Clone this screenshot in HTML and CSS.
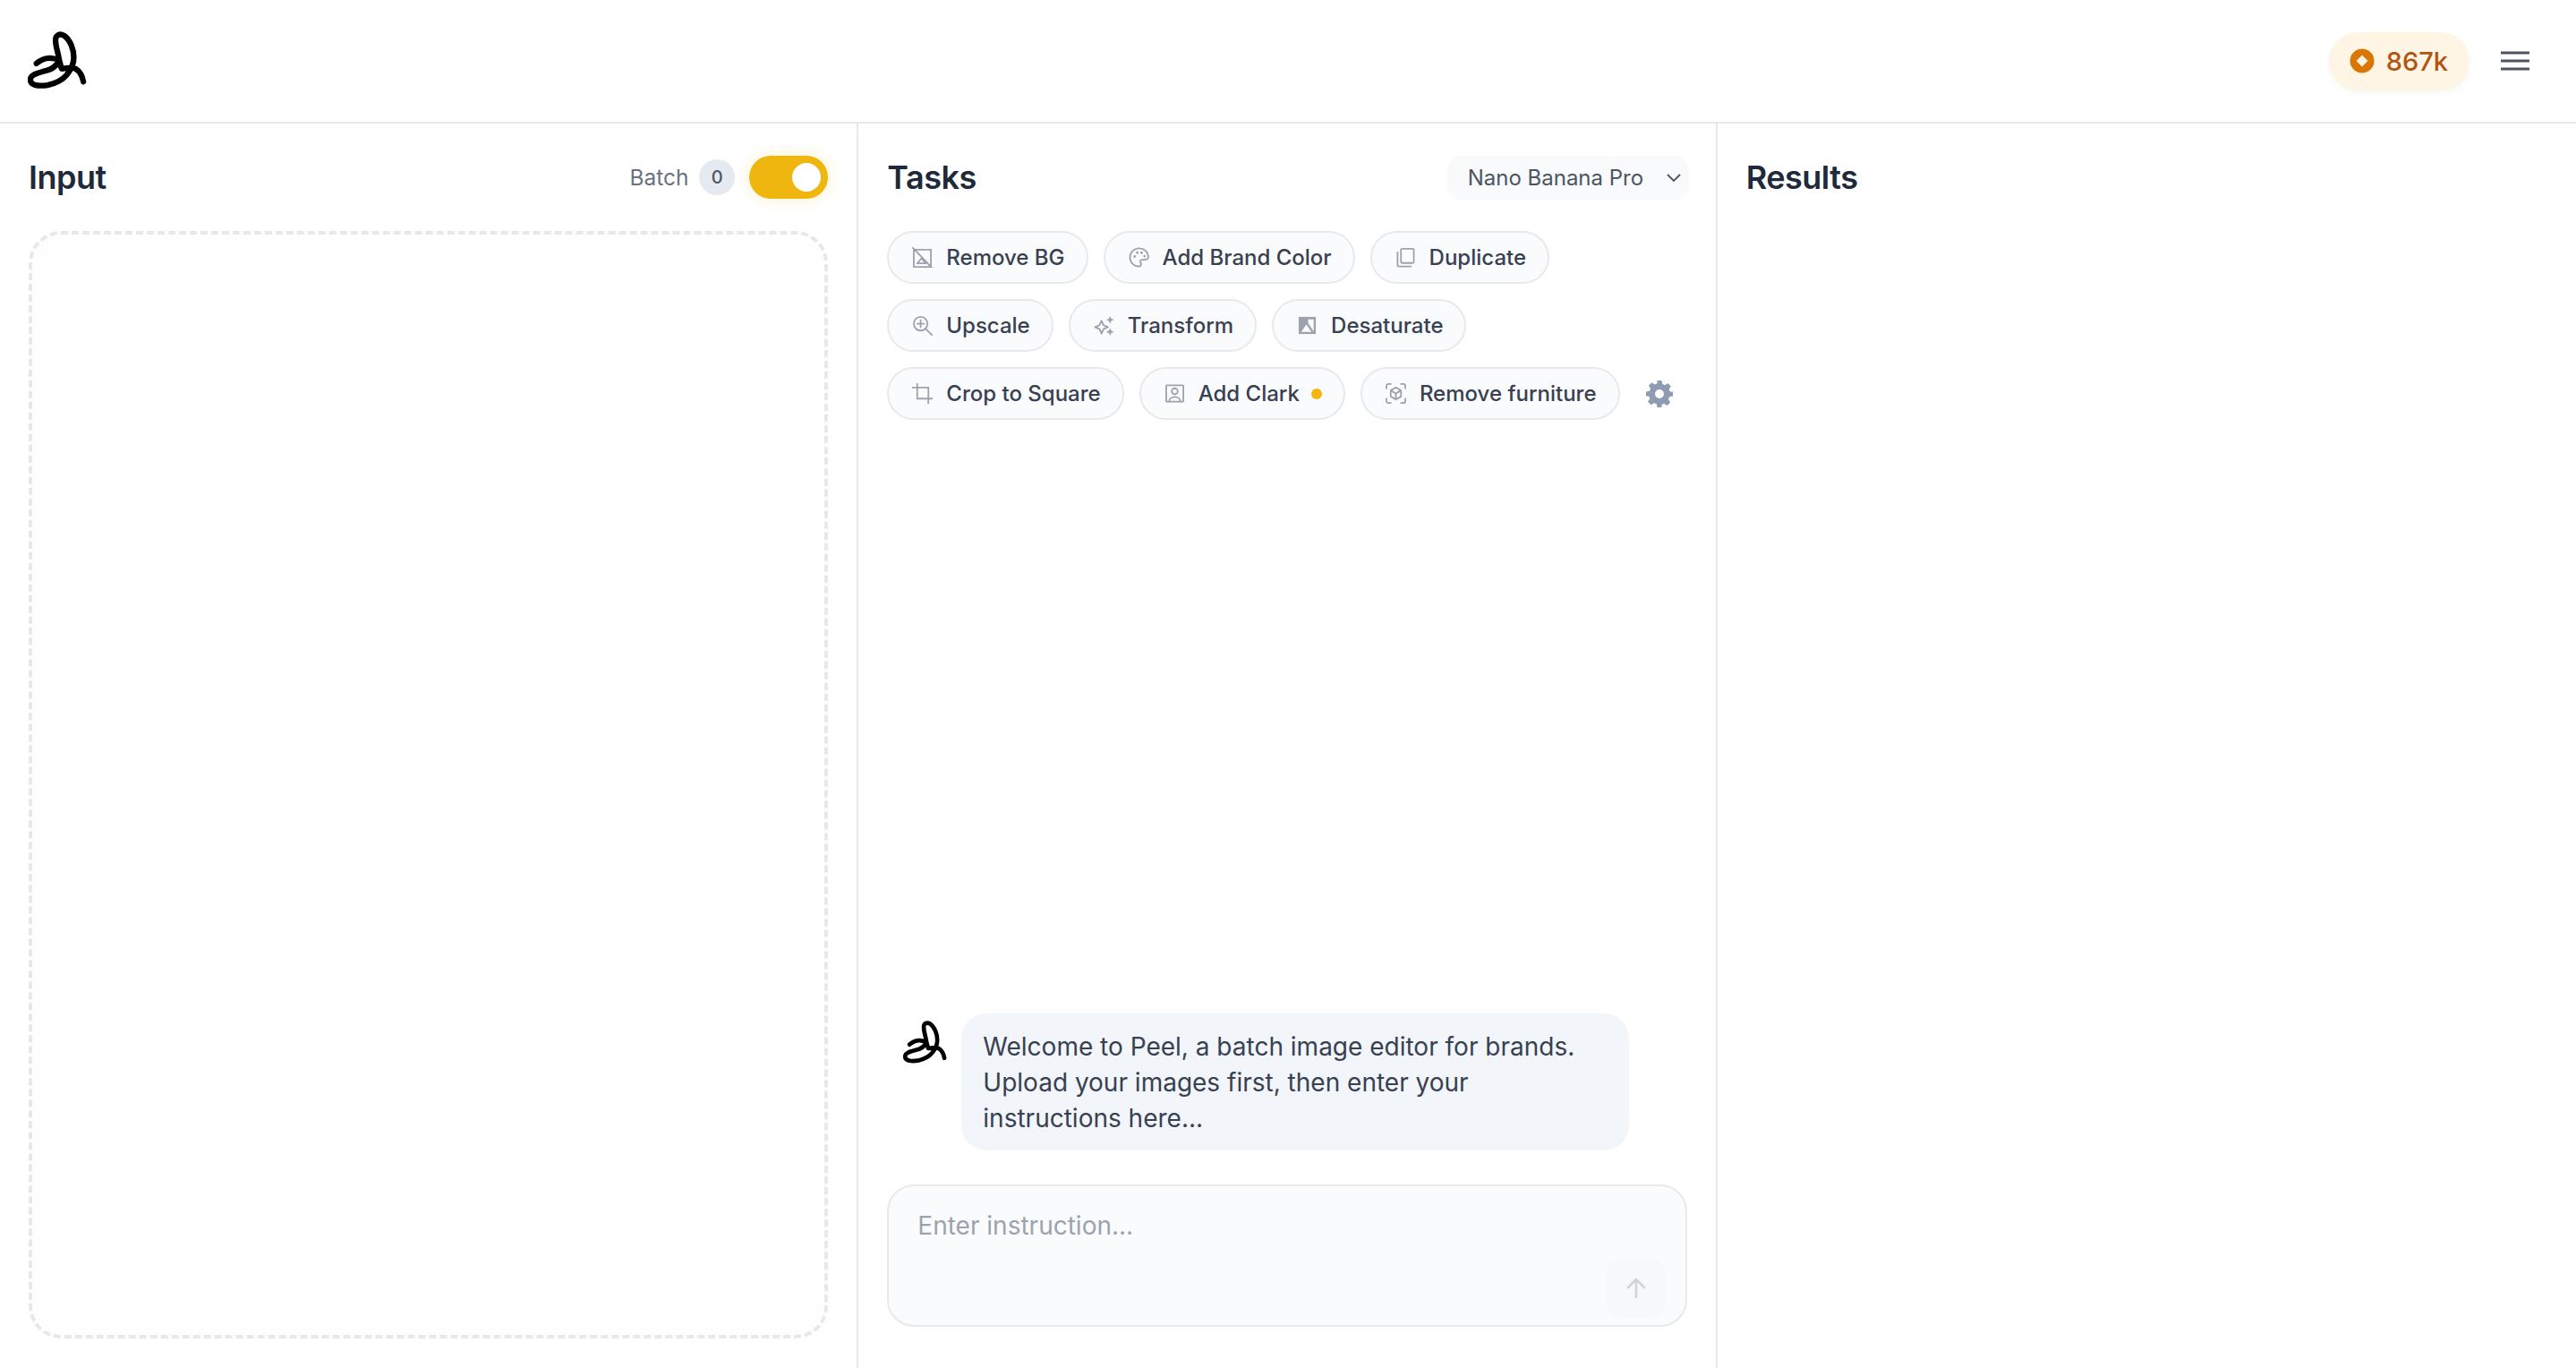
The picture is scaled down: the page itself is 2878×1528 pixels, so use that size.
FILE: index.html
```html
<!DOCTYPE html>
<html lang="en">
<head>
  <meta charset="UTF-8">
  <meta name="viewport" content="width=device-width, initial-scale=1.0">
  <title>Peel</title>
  <link rel="stylesheet" href="styles.css">
</head>
<body>

  <svg class="defs">
    <defs>
      <g id="banana">
        <path d="M40 71C46 66 52 64 58 65C62 65.500 65 66 66 68C64 72 60 76 55 78C49 80 42 81 37 84C33 86 32 90 34 93C37 97 45 97 53 96C62 94 70 90 75 84C80 78 83 72 83 64C83 55 79 44 72 39C67 36 62 38 62 44C62 52 65 58 66 66C67 70 68 74 69 77C74 77 80 74 85 77C90 80 93 86 94 92"/>
      </g>
    </defs>
  </svg>

  <header class="topbar">
    <svg class="logo" viewBox="30 34 68 68"><use href="#banana"/></svg>
    <div class="topbar-right">
      <div class="credits">
        <svg class="coin" viewBox="0 0 28 28"><circle cx="14" cy="14" r="13.500" fill="#d97706"/><path d="M14 7.500L20.500 14L14 20.500L7.500 14Z" fill="#fff3e0"/></svg>
        <span>867k</span>
      </div>
      <svg class="menu" viewBox="0 0 32 24"><path d="M1 3H31M1 12H31M1 21H31"/></svg>
    </div>
  </header>

  <main class="columns">
    <section class="col col-input">
      <div class="col-head">
        <h2>Input</h2>
        <div class="batch">
          <span class="batch-label">Batch</span>
          <span class="batch-count">0</span>
          <span class="toggle"><span class="knob"></span></span>
        </div>
      </div>
      <div class="dropzone"></div>
    </section>

    <section class="col col-tasks">
      <div class="col-head">
        <h2>Tasks</h2>
        <div class="model-select">
          <span>Nano Banana Pro</span>
          <svg viewBox="0 0 24 24"><path d="M5 9l7 7 7-7"/></svg>
        </div>
      </div>

      <div class="chips">
        <button class="chip">
          <svg viewBox="0 0 24 24"><path d="M2 3h20v20H2zM1 1l22 23M6 19l5-6 5 6z"/></svg>
          Remove BG
        </button>
        <button class="chip">
          <svg viewBox="0 0 24 24"><path d="M12 1.500C6 1.500 1.500 6.300 1.500 12S6 22.500 12 22.500c1.600 0 2.500-1 2.500-2.300 0-1.800-1-2-1-3.300 0-1.200 1-2.200 2.300-2.200h2.700c2.600 0 4.500-1.400 4.500-3.700C22.500 5.500 18 1.500 12 1.500z"/><circle class="fill" cx="7" cy="11" r="1.500"/><circle class="fill" cx="10" cy="6.500" r="1.500"/><circle class="fill" cx="15" cy="6.500" r="1.500"/><circle class="fill" cx="18.500" cy="10.500" r="1.500"/></svg>
          Add Brand Color
        </button>
        <button class="chip">
          <svg viewBox="0 0 24 24"><path d="M8 2h12a1.500 1.500 0 0 1 1.500 1.500V17a1.500 1.500 0 0 1-1.500 1.500H8A1.500 1.500 0 0 1 6.500 17V3.500A1.500 1.500 0 0 1 8 2zM2.500 6v15a1.500 1.500 0 0 0 1.500 1.500h14"/></svg>
          Duplicate
        </button>
        <button class="chip">
          <svg viewBox="0 0 24 24"><circle cx="10" cy="10" r="8"/><path d="M10 6v8M6 10h8M16 16l7 7"/></svg>
          Upscale
        </button>
        <button class="chip">
          <svg viewBox="0 0 24 24"><path d="M9 6.500l2.300 5.200 5.200 2.300-5.200 2.300L9 21.500l-2.300-5.200L1.500 14l5.200-2.300z"/><path class="fill" d="M19 1l1.400 3.100 3.100 1.400-3.100 1.400L19 10l-1.400-3.100-3.100-1.400 3.100-1.400zM19 15l1.400 3.100 3.100 1.400-3.100 1.400L19 24l-1.400-3.100-3.100-1.400 3.100-1.400z"/></svg>
          Transform
        </button>
        <button class="chip">
          <svg viewBox="0 0 24 24"><path class="fill" d="M2 2h20v20H2z"/><path class="cut" d="M13 5h6.500v14L13 9zM5 19.500L11 11l6 8.500z"/></svg>
          Desaturate
        </button>
        <button class="chip">
          <svg viewBox="0 0 24 24"><path d="M6 0v18h18M0 5h19v19"/></svg>
          Crop to Square
        </button>
        <button class="chip">
          <svg viewBox="0 0 24 24"><path d="M3 2.500h18a1 1 0 0 1 1 1v17a1 1 0 0 1-1 1H3a1 1 0 0 1-1-1v-17a1 1 0 0 1 1-1z"/><circle cx="12" cy="9.500" r="3.500"/><path d="M5.500 21.500c0-3.500 3-5.500 6.500-5.500s6.500 2 6.500 5.500"/></svg>
          Add Clark
          <span class="dot"></span>
        </button>
        <button class="chip">
          <svg viewBox="0 0 24 24"><path d="M1 6V3a2 2 0 0 1 2-2h3M18 1h3a2 2 0 0 1 2 2v3M23 18v3a2 2 0 0 1-2 2h-3M6 23H3a2 2 0 0 1-2-2v-3M12 5l6 3.500v7L12 19l-6-3.500v-7zM6 8.500l6 3.500 6-3.500M12 12v7"/></svg>
          Remove furniture
        </button>
        <svg class="gear" viewBox="0 0 24 24"><path fill-rule="evenodd" d="M10 0h4l.6 3.200c.8.2 1.500.5 2.200.9l2.700-1.800 2.800 2.800-1.800 2.700c.4.700.7 1.400.9 2.200L24 10v4l-3.200.6c-.2.8-.5 1.500-.9 2.200l1.800 2.700-2.800 2.800-2.700-1.800c-.7.4-1.400.7-2.200.9L14 24h-4l-.6-3.200c-.8-.2-1.500-.5-2.200-.9l-2.700 1.800-2.800-2.800 1.800-2.700c-.4-.7-.7-1.400-.9-2.200L0 14v-4l3.200-.6c.2-.8.5-1.500.9-2.200L2.300 4.500l2.800-2.800 2.700 1.800c.7-.4 1.400-.7 2.200-.9zM12 8a4 4 0 1 0 0 8 4 4 0 0 0 0-8z"/></svg>
      </div>

      <div class="chat">
        <div class="message">
          <svg class="message-logo" viewBox="30 34 68 68"><use href="#banana"/></svg>
          <p class="bubble">Welcome to Peel, a batch image editor for brands. Upload your images first, then enter your instructions here...</p>
        </div>
        <div class="composer">
          <div class="placeholder">Enter instruction...</div>
          <button class="send">
            <svg viewBox="0 0 24 24"><path d="M12 22V3M3 11l9-9 9 9"/></svg>
          </button>
        </div>
      </div>
    </section>

    <section class="col col-results">
      <div class="col-head">
        <h2>Results</h2>
      </div>
    </section>
  </main>

</body>
</html>
```
FILE: styles.css
```css
* {
  box-sizing: border-box;
}

html,
body {
  height: 100%;
}

body {
  margin: 0;
  font-family: "Inter", "Liberation Sans", sans-serif;
  background: #fff;
  color: #374151;
  overflow: hidden;
  display: flex;
  flex-direction: column;
}

.defs {
  display: none;
}

#banana {
  fill: none;
  stroke: #000;
  stroke-width: 6.500;
  stroke-linecap: round;
  stroke-linejoin: round;
}

.topbar {
  height: 138px;
  flex-shrink: 0;
  border-bottom: 2px solid #e7e9ec;
  padding: 0 52px 0 31px;
  display: flex;
  align-items: center;
  justify-content: space-between;
}

.logo {
  width: 66px;
  height: 66px;
}

.topbar-right {
  display: flex;
  align-items: center;
  gap: 35px;
}

.credits {
  height: 65px;
  padding: 0 24px 0 23px;
  border-radius: 33px;
  background: #fef5e5;
  box-shadow: 0 3px 6px rgba(120, 90, 30, 0.05);
  color: #b4530f;
  font-size: 29px;
  font-weight: 500;
  display: flex;
  align-items: center;
  gap: 13px;
}

.coin {
  width: 28px;
  height: 28px;
}

.menu {
  width: 32px;
  height: 24px;
  fill: none;
  stroke: #4b5563;
  stroke-width: 3;
  stroke-linecap: round;
}

.columns {
  flex: 1;
  min-height: 0;
  display: grid;
  grid-template-columns: repeat(3, 1fr);
}

.col {
  padding: 36px 32px 33px;
  border-right: 2px solid #e7e9ec;
  display: flex;
  flex-direction: column;
  min-height: 0;
}

.col-results {
  border-right: none;
}

.col-tasks {
  padding-bottom: 46px;
}

.col-head {
  height: 48px;
  display: flex;
  align-items: center;
  justify-content: space-between;
  margin-bottom: 36px;
}

h2 {
  margin: 0;
  font-size: 36px;
  font-weight: 600;
  color: #1e293b;
  letter-spacing: -0.5px;
}

.batch {
  display: flex;
  align-items: center;
  gap: 12px;
}

.batch-label {
  font-size: 24.400px;
  color: #6b7280;
}

.batch-count {
  width: 40px;
  height: 40px;
  border-radius: 50%;
  background: #e5e9f0;
  color: #4b5563;
  font-size: 20px;
  font-weight: 500;
  display: flex;
  align-items: center;
  justify-content: center;
}

.toggle {
  width: 88px;
  height: 48px;
  margin-left: 4px;
  border-radius: 24px;
  background: #efb60f;
  box-shadow: 0 0 18px rgba(239, 182, 15, 0.22);
  display: flex;
  align-items: center;
  justify-content: flex-end;
  padding-right: 8px;
}

.knob {
  width: 32px;
  height: 32px;
  border-radius: 50%;
  background: #fff;
}

.dropzone {
  flex: 1;
  border: 4px dashed #e6e8eb;
  border-radius: 36px;
  background: #fefefe;
}

.model-select {
  height: 49px;
  width: 270px;
  margin-right: -2px;
  padding: 0 5px 0 23px;
  border-radius: 16px;
  background: #f9fafb;
  color: #4b5563;
  font-size: 24px;
  display: flex;
  align-items: center;
  justify-content: space-between;
}

.model-select svg {
  width: 24px;
  height: 24px;
  fill: none;
  stroke: #4b5563;
  stroke-width: 1.800;
}

.chips {
  display: flex;
  flex-wrap: wrap;
  align-items: center;
  gap: 17px;
}

.chip {
  height: 59px;
  padding: 0 24px 0 26px;
  border: 2px solid #e7e9ed;
  border-radius: 30px;
  background: #fafbfc;
  color: #374151;
  font-family: inherit;
  font-size: 24px;
  font-weight: 500;
  display: flex;
  align-items: center;
  gap: 15px;
}

.chip svg {
  width: 23px;
  height: 23px;
  fill: none;
  stroke: #9ca3af;
  stroke-width: 1.900;
  stroke-linecap: round;
  stroke-linejoin: round;
}

.chip svg .fill {
  fill: #9ca3af;
  stroke: none;
}

.chip svg .cut {
  fill: #fafbfc;
  stroke: none;
}

.dot {
  width: 12px;
  height: 12px;
  margin-left: -2px;
  border-radius: 50%;
  background: #f5b50f;
}

.gear {
  width: 30px;
  height: 30px;
  margin-left: 12px;
  fill: #8f9bb3;
}

.chat {
  margin-top: auto;
}

.message {
  display: flex;
  align-items: flex-start;
  gap: 16px;
  padding-left: 18px;
  margin-bottom: 38px;
}

.message-logo {
  width: 49px;
  height: 49px;
  margin-top: 8px;
  flex-shrink: 0;
}

.bubble {
  margin: 0;
  width: 746px;
  padding: 17px 24px 16px;
  border-radius: 28px;
  background: #f2f5f9;
  color: #374151;
  font-size: 28px;
  line-height: 40px;
}

.composer {
  position: relative;
  height: 159px;
  padding: 24px 32px;
  border: 2px solid #e7e9ed;
  border-radius: 30px;
  background: #fafbfc;
}

.placeholder {
  font-size: 28px;
  line-height: 40px;
  color: #9ca3af;
}

.send {
  position: absolute;
  right: 22px;
  bottom: 8px;
  width: 66px;
  height: 66px;
  border: none;
  border-radius: 18px;
  background: #f6f8fa;
  display: flex;
  align-items: center;
  justify-content: center;
}

.send svg {
  width: 24px;
  height: 24px;
  fill: none;
  stroke: #d1d5db;
  stroke-width: 2.600;
  stroke-linecap: round;
  stroke-linejoin: round;
}
```
